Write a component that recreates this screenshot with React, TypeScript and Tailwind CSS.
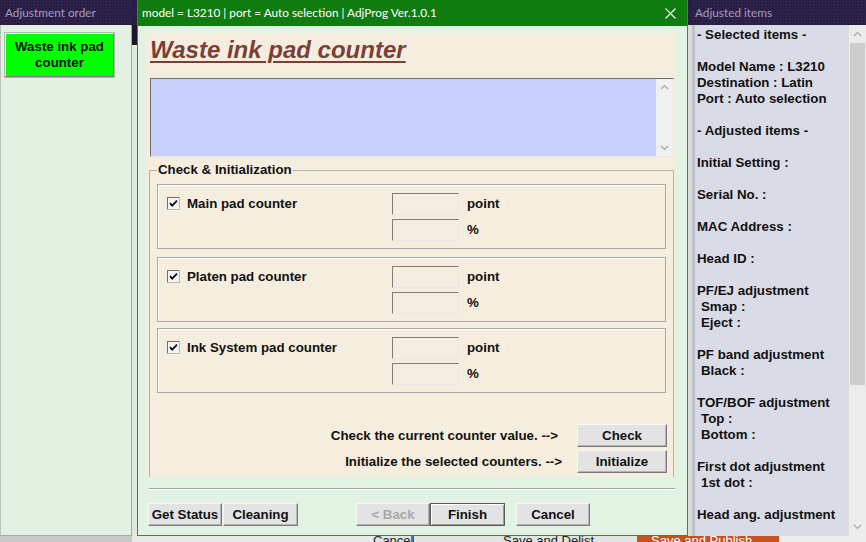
import React from "react";

function Check() {
  return (
    <svg width="13" height="13" viewBox="0 0 13 13" className="shrink-0">
      <rect x="0" y="0" width="13" height="13" fill="#b9b9b9" />
      <rect x="0" y="0" width="12" height="12" fill="#6f6f6f" />
      <rect x="1" y="1" width="11" height="11" fill="#f4f4f4" />
      <path d="M3 6.2 L5.2 8.6 L10 3.6" fill="none" stroke="#111" strokeWidth="1.9" />
    </svg>
  );
}

function Up() {
  return (
    <svg width="9" height="6" viewBox="0 0 9 6">
      <path d="M1 5 L4.5 1.5 L8 5" fill="none" stroke="#a6a6a6" strokeWidth="1.2" />
    </svg>
  );
}
function Down() {
  return (
    <svg width="9" height="6" viewBox="0 0 9 6">
      <path d="M1 1 L4.5 4.5 L8 1" fill="none" stroke="#a6a6a6" strokeWidth="1.2" />
    </svg>
  );
}

function Btn({
  children,
  className = "",
  disabled = false,
  def = false,
}: {
  children: React.ReactNode;
  className?: string;
  disabled?: boolean;
  def?: boolean;
}) {
  return (
    <div
      className={`flex items-center justify-center h-[23px] bg-[#e3e3e3] border text-[13.3px] font-bold leading-none ${
        def
          ? "border-[#5a5a5a] shadow-[inset_1px_1px_0_#ffffff,inset_-1px_-1px_0_#9a9a9a]"
          : "border-t-[#f8f8f8] border-l-[#f8f8f8] border-r-[#7a7a7a] border-b-[#7a7a7a] shadow-[inset_-1px_-1px_0_#b4b4b4]"
      } ${disabled ? "text-[#a8a8a8]" : "text-[#111111]"} ${className}`}
    >
      {children}
    </div>
  );
}

function Field() {
  return (
    <div className="w-[67px] h-[22px] bg-[#f3eedf] border border-t-[#7e7e7e] border-l-[#7e7e7e] border-r-[#e8e8e8] border-b-[#e8e8e8]" />
  );
}

function PadBox({ label, extra = "" }: { label: string; extra?: string }) {
  return (
    <div className={`shrink-0 h-[65px] border border-[#a9a9a9] shadow-[inset_1px_1px_0_#ffffff] pt-[8px] pl-[9px] flex ${extra}`}>
      <div className="w-[225px] h-[22px] flex items-center gap-[7px]">
        <div className="mt-[-2px]">
          <Check />
        </div>
        <span className="text-[13.3px] font-bold text-[#111]">{label}</span>
      </div>
      <div className="flex flex-col gap-[4px]">
        <div className="flex items-center gap-[8px]">
          <Field />
          <span className="text-[13.3px] font-bold text-[#111]">point</span>
        </div>
        <div className="flex items-center gap-[8px]">
          <Field />
          <span className="text-[13.3px] font-bold text-[#111]">%</span>
        </div>
      </div>
    </div>
  );
}

const rightLines: [string, boolean][] = [
  ["- Selected items -", false],
  ["", false],
  ["Model Name : L3210", false],
  ["Destination : Latin", false],
  ["Port : Auto selection", false],
  ["", false],
  ["- Adjusted items -", false],
  ["", false],
  ["Initial Setting :", false],
  ["", false],
  ["Serial No. :", false],
  ["", false],
  ["MAC Address :", false],
  ["", false],
  ["Head ID :", false],
  ["", false],
  ["PF/EJ adjustment", false],
  ["Smap :", true],
  ["Eject :", true],
  ["", false],
  ["PF band adjustment", false],
  ["Black :", true],
  ["", false],
  ["TOF/BOF adjustment", false],
  ["Top :", true],
  ["Bottom :", true],
  ["", false],
  ["First dot adjustment", false],
  ["1st dot :", true],
  ["", false],
  ["Head ang. adjustment", false],
];

export default function App() {
  return (
    <div className="w-[866px] h-[542px] overflow-hidden bg-[#d6d6d6] flex flex-col font-['Liberation_Sans',Arial,sans-serif]">
      <div className="flex h-[536px] shrink-0">
        {/* Left panel */}
        <div className="w-[132px] flex flex-col">
          <div className="h-[25px] shrink-0 bg-[#2a1e45] bg-[radial-gradient(#3b2f5c_1px,transparent_1px)] bg-[length:3px_3px] flex items-center pl-[5px] font-['Lato','Noto_Sans',sans-serif] text-[11.8px] text-[#a39dc0]">
            Adjustment order
          </div>
          <div className="flex-1 bg-[#e2f1e2] border-l border-r border-b border-l-[#b8c4b8] border-r-[#a3aba3] border-b-[#a3aba3] pt-[8px] pl-[4px]">
            <div className="w-[109px] h-[44px] bg-[#00ff00] border border-t-[#f4f4f4] border-l-[#f4f4f4] border-r-[#7a7a7a] border-b-[#7a7a7a] shadow-[0_0_0_1px_#b5b5b5] flex flex-col items-center justify-center text-[13.3px] font-bold leading-[16px] text-[#111]">
              <span>Waste ink pad</span>
              <span>counter</span>
            </div>
          </div>
        </div>

        {/* gap strip */}
        <div className="w-[5px] flex flex-col">
          <div className="h-[25px] bg-[#2a1e45]" />
          <div className="h-[20px] bg-[#1c1828]" />
          <div className="flex-1 bg-[#dfe7df]" />
        </div>

        {/* Dialog */}
        <div className="w-[551px] flex flex-col border-x border-b border-[#3a8a3a]">
          <div className="h-[26px] shrink-0 bg-[#107c10] flex items-center justify-between pl-[4px] pr-[11px] font-['Lato','Noto_Sans',sans-serif] text-[11.8px] text-white">
            <span>model = L3210 | port = Auto selection | AdjProg Ver.1.0.1</span>
            <svg width="11" height="11" viewBox="0 0 11 11">
              <path d="M0.5 0.5 L10.5 10.5 M10.5 0.5 L0.5 10.5" stroke="#ffffff" strokeWidth="1.1" />
            </svg>
          </div>
          <div className="flex-1 bg-[#e3f3e3] pt-[7px] pl-[8px] pr-[12px] flex flex-col">
            {/* cream */}
            <div className="shrink-0 w-[529px] h-[444px] bg-[#f5eedf] pl-[4px] flex flex-col overflow-hidden">
              <div className="shrink-0 mt-[1px] h-[31px] leading-[31px] text-[24px] font-bold italic text-[#7c3f38] underline decoration-[2px] underline-offset-[3px] whitespace-nowrap">
                Waste ink pad counter
              </div>
              <div className="shrink-0 mt-[13px] w-[524px] h-[79px] bg-[#c8d1fb] border border-t-[#6e6e6e] border-l-[#6e6e6e] border-r-[#e6e6e6] border-b-[#e6e6e6] flex justify-end">
                <div className="w-[17px] bg-[#f0f0f0] flex flex-col items-center justify-between py-[5px]">
                  <Up />
                  <Down />
                </div>
              </div>
              <fieldset className="shrink-0 mt-[5px] ml-[-1px] w-[525px] h-[315px] border border-b-0 border-[#b3b3b3] px-[7px]">
                <legend className="px-[1px] text-[13.3px] font-bold leading-[16px] text-[#111]">
                  Check &amp; Initialization
                </legend>
                <div className="pt-[6px] flex flex-col">
                  <PadBox label="Main pad counter" />
                  <PadBox label="Platen pad counter" extra="mt-[8px]" />
                  <PadBox label="Ink System pad counter" extra="mt-[6px]" />
                </div>
                <div className="mt-[31px] flex flex-col gap-[3px]">
                  <div className="flex items-center justify-end mr-[-1px]">
                    <span className="text-[13.3px] font-bold text-[#111] mr-[19px]">
                      Check the current counter value. --&gt;
                    </span>
                    <Btn className="w-[90px]">Check</Btn>
                  </div>
                  <div className="flex items-center justify-end mr-[-1px]">
                    <span className="text-[13.3px] font-bold text-[#111] mr-[15px]">
                      Initialize the selected counters. --&gt;
                    </span>
                    <Btn className="w-[90px]">Initialize</Btn>
                  </div>
                </div>
              </fieldset>
            </div>
            <div className="shrink-0 mt-[11px] ml-[3px] w-[526px] h-[2px] border-t border-t-[#a5a5a5] border-b border-b-[#ffffff]" />
            <div className="mt-[13px] ml-[2px] flex">
              <Btn className="w-[74px]">Get Status</Btn>
              <Btn className="w-[75px] ml-[1px]">Cleaning</Btn>
              <Btn className="w-[74px] ml-[58px]" disabled>
                &lt; Back
              </Btn>
              <Btn className="w-[75px]" def>
                Finish
              </Btn>
              <Btn className="w-[74px] ml-[11px]">Cancel</Btn>
            </div>
          </div>
        </div>

        {/* gap strip */}
        <div className="w-[4px] flex flex-col">
          <div className="h-[25px] bg-[#2a1e45]" />
          <div className="flex-1 bg-[#d9ddd9]" />
        </div>

        {/* Right panel */}
        <div className="w-[174px] flex flex-col">
          <div className="h-[25px] shrink-0 bg-[#2a1e45] bg-[radial-gradient(#3b2f5c_1px,transparent_1px)] bg-[length:3px_3px] flex items-center pl-[3px] font-['Lato','Noto_Sans',sans-serif] text-[11.8px] text-[#a39dc0]">
            Adjusted items
          </div>
          <div className="flex-1 flex bg-[#d9dce6] border-l-[3px] border-l-[#bcc0c9] overflow-hidden">
            <div className="flex-1 pt-[2px] pl-[2px] text-[13.3px] font-bold leading-[16px] text-[#111] whitespace-nowrap overflow-hidden">
              {rightLines.map(([t, ind], i) => (
                <div key={i} className={`h-[16px] ${ind ? "pl-[4px]" : ""}`}>
                  {t}
                </div>
              ))}
            </div>
            <div className="w-[17px] flex flex-col bg-[#ececec]">
              <div className="h-[18px] shrink-0 flex items-center justify-center">
                <Up />
              </div>
              <div className="h-[342px] shrink-0 mx-[1px] bg-[#cdcdcd]" />
              <div className="flex-1" />
              <div className="h-[18px] shrink-0 flex items-center justify-center">
                <Down />
              </div>
            </div>
          </div>
        </div>
      </div>

      {/* bottom strip (background window) */}
      <div className="h-[6px] shrink-0 flex overflow-hidden text-[13px] leading-[10px] bg-[#e4e4e4]">
        <div className="w-[132px] bg-[#c9c9c9]" />
        <div className="w-[241px] bg-[#e9e9e9]" />
        <div className="w-[41px] text-[#222] border-r border-r-[#555]">Cancel</div>
        <div className="w-[89px]" />
        <div className="w-[134px] text-[#222]">Save and Delist</div>
        <div className="w-[142px] bg-[#c8521f] text-white pl-[14px]">Save and Publish</div>
        <div className="flex-1 bg-[#ececec]" />
      </div>
    </div>
  );
}
